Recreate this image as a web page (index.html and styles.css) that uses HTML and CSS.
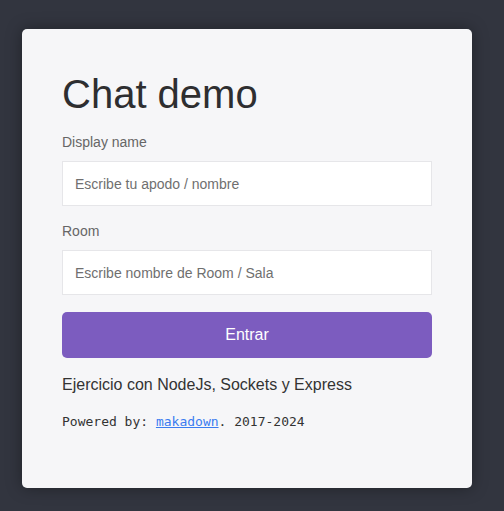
FILE: index.html
```html
<!DOCTYPE html>
<html lang="es">
<head>
<meta charset="utf-8">
<title>Chat demo</title>
<link rel="stylesheet" href="styles.css">
</head>
<body>
<main class="page">
  <form class="card">
    <h1 class="title">Chat demo</h1>
    <label class="label" for="name">Display name</label>
    <input class="field" id="name" type="text" placeholder="Escribe tu apodo / nombre">
    <label class="label" for="room">Room</label>
    <input class="field" id="room" type="text" placeholder="Escribe nombre de Room / Sala">
    <button class="btn" type="button">Entrar</button>
    <p class="desc">Ejercicio con NodeJs, Sockets y Express</p>
    <p class="powered">Powered by: <a href="#" class="link">makadown</a>. 2017-2024</p>
  </form>
</main>
</body>
</html>
```
FILE: styles.css
```css
html, body {
  margin: 0;
  padding: 0;
  background: #32353f;
  height: 100%;
}
body {
  font-family: "Liberation Sans", Arial, sans-serif;
}
.page {
  padding: 29px 0 0 22px;
}
.card {
  box-sizing: border-box;
  width: 450px;
  height: 459px;
  background: #f6f6f8;
  border-radius: 5px;
  box-shadow: 0 0 16px rgba(0, 0, 0, 0.35);
  padding: 40px 40px;
  display: flex;
  flex-direction: column;
}
.title {
  margin: 0;
  font-weight: normal;
  font-size: 40px;
  line-height: 50px;
  color: #2e2e30;
}
.label {
  margin-top: 17px;
  font-size: 14px;
  line-height: 16px;
  color: #666;
}
.title + .label {
  margin-top: 15px;
}
.field {
  box-sizing: border-box;
  margin-top: 11px;
  height: 45px;
  width: 370px;
  border: 1px solid #e6e6e9;
  background: #fff;
  padding: 0 12px;
  font-family: "Liberation Sans", Arial, sans-serif;
  font-size: 14px;
  color: #333;
  outline: none;
}
.field::placeholder {
  color: #6f6f6f;
}
.btn {
  margin-top: 17px;
  height: 46px;
  width: 370px;
  border: none;
  border-radius: 5px;
  background: #7c5cbf;
  color: #fff;
  font-family: "Liberation Sans", Arial, sans-serif;
  font-size: 16px;
}
.desc {
  margin: 18px 0 0;
  font-size: 16px;
  line-height: 18px;
  color: #333;
}
.powered {
  margin: 20px 0 0;
  font-family: "DejaVu Sans Mono", monospace;
  font-size: 13px;
  line-height: 15px;
  color: #333;
}
.link {
  color: #3a7cf0;
}
```
